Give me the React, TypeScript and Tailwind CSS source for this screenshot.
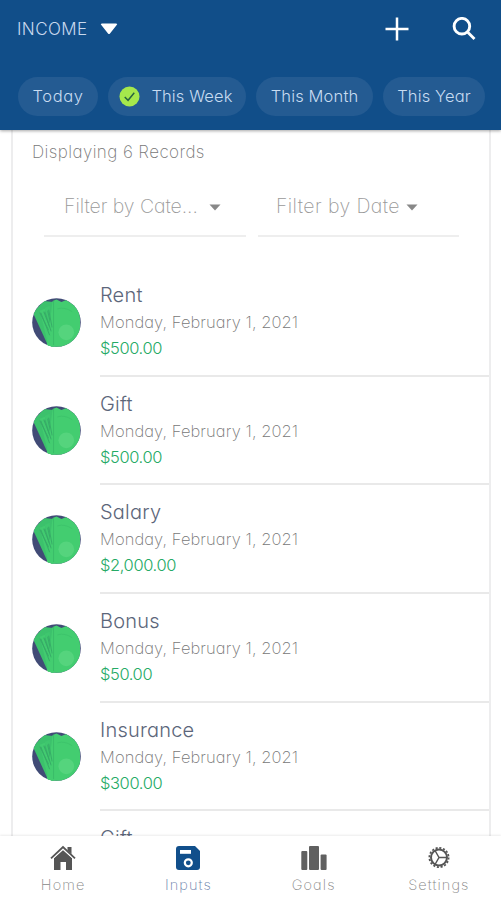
import clsx from 'clsx';
import type { ReactNode } from 'react';

const ranges = [
  { label: 'Today', size: 'w-20', text: 'text-[16.5px] tracking-[0.6px]' },
  { label: 'This Week', size: 'w-[138px]', text: 'text-[16.5px] tracking-[0.1px]', active: true },
  { label: 'This Month', size: 'w-[117px]', text: 'text-[16.5px] tracking-[0.15px]' },
  { label: 'This Year', size: 'w-[102px]', text: 'text-[16.5px] tracking-[0.15px]' },
];

const records = [
  { id: 1, name: 'Rent', date: 'Monday, February 1, 2021', amount: '$500.00' },
  { id: 2, name: 'Gift', date: 'Monday, February 1, 2021', amount: '$500.00' },
  { id: 3, name: 'Salary', date: 'Monday, February 1, 2021', amount: '$2,000.00' },
  { id: 4, name: 'Bonus', date: 'Monday, February 1, 2021', amount: '$50.00' },
  { id: 5, name: 'Insurance', date: 'Monday, February 1, 2021', amount: '$300.00' },
  { id: 6, name: 'Gift', date: 'Monday, February 1, 2021', amount: '$500.00' },
];

function MoneyAvatar() {
  return (
    <svg viewBox="0 0 50 50" className="block h-[49px] w-[49px] shrink-0">
      <defs>
        <clipPath id="avatar">
          <circle cx="25" cy="25" r="24.8" />
        </clipPath>
      </defs>
      <g clipPath="url(#avatar)">
        <rect width="50" height="50" fill="#414b76" />
        <path d="M1 15L12 3L22 4V50H17Z" fill="#3cc16c" />
        <path d="M8 13L13 11L22 50H17Z" fill="#42cb70" />
        <path d="M13 10L18 8L22 50Z" fill="#3fc66e" />
        <path d="M8 15L17 33M12 14L19 32M16 13L20 31" stroke="#35a967" strokeWidth="0.9" fill="none" />
        <path d="M15 50L21 3L25 1.5L30 4L35 2L44 8Q49 14 49 22V50Z" fill="#43cd70" />
        <path d="M9 15L18 38M13 14L19.5 34M17 12L20.5 30" stroke="#35a967" strokeWidth="0.9" fill="none" />
        <path d="M22 3V48" stroke="#39ba69" strokeWidth="0.9" />
        <path d="M26 11Q34 9 41 14" stroke="#3dc46c" fill="none" />
        <circle cx="35" cy="35" r="8" fill="#55d47d" />
      </g>
    </svg>
  );
}

function HomeIcon() {
  return (
    <svg viewBox="0 0 26 26" className="h-[26px] w-[26px]" fill="#555">
      <path d="M13 5L22 13V25H16V17H10.5V25H4V13Z" />
      <path d="M1 14L13 3L25 14" fill="none" stroke="#fff" strokeWidth="3" />
      <path d="M17.5 2H21.5V9L17.5 5.5Z" />
      <path d="M1 13.4L13 2L25 13.4" fill="none" stroke="#555" strokeWidth="1.8" />
    </svg>
  );
}

function SaveIcon() {
  return (
    <svg viewBox="0 0 26 26" className="h-[26px] w-[26px]">
      <path d="M4 1H20L25 6V22Q25 25 22 25H4Q1 25 1 22V4Q1 1 4 1Z" fill="#114f8b" />
      <rect x="5" y="5" width="11" height="3.8" fill="#fff" />
      <circle cx="13.3" cy="17.8" r="3.5" fill="none" stroke="#fff" strokeWidth="2.2" />
    </svg>
  );
}

function BarsIcon() {
  return (
    <svg viewBox="0 0 26 26" className="h-[26px] w-[26px]" fill="#606060">
      <rect x="0.3" y="6" width="6" height="19" rx="1" />
      <rect x="8" y="1" width="10" height="24" rx="1" />
      <rect x="19.6" y="9.5" width="6" height="15.5" rx="1" />
    </svg>
  );
}

function GearIcon() {
  return (
    <svg viewBox="0 0 26 26" className="h-[26px] w-[26px]" fill="none" stroke="#555">
      <circle cx="13" cy="12.5" r="9.6" strokeWidth="1.8" strokeDasharray="2.1 1.67" />
      <circle cx="13" cy="12.5" r="8" strokeWidth="2" />
      <path d="M13 12.5H21M13 12.5L9 5.5M13 12.5L9 19.5" strokeWidth="1.5" />
    </svg>
  );
}

function Caret() {
  return (
    <svg viewBox="0 0 12 7" className="h-[7px] w-3" fill="#888">
      <path d="M0.5 0.5H11.5L6 6.5Z" />
    </svg>
  );
}

function Tab({ label, active, children }: { label: string; active?: boolean; children: ReactNode }) {
  return (
    <button className="flex flex-1 flex-col items-center pt-[9px] pl-px">
      {children}
      <span
        className={clsx(
          'mt-1 text-[14.5px] leading-5 font-extralight tracking-[1.1px]',
          active ? 'text-[#6b7fab]' : 'text-[#888]',
        )}
      >
        {label}
      </span>
    </button>
  );
}

export default function App() {
  return (
    <div className="flex h-[900px] w-[501px] flex-col overflow-hidden bg-white font-['Inter',sans-serif] font-light [font-feature-settings:'cv11']">
      <header className="z-10 h-[130px] shrink-0 bg-[#114e89] shadow-[0_1px_3px_rgba(0,0,0,0.35)]">
        <div className="flex h-[57px] items-center pr-[25px] pl-[17px] text-white">
          <span className="w-[83px] text-[17px] leading-6 tracking-[0.4px] text-[#c8d8ed]">INCOME</span>
          <svg viewBox="0 0 18 12" className="h-3 w-[18px]" fill="#fff">
            <path d="M2 0.5H16Q18 0.5 16.7 2L10 10.5Q9 11.7 8 10.5L1.3 2Q0 0.5 2 0.5Z" />
          </svg>
          <svg viewBox="0 0 24 24" className="ml-auto h-6 w-6" stroke="#fff" strokeWidth="2.5">
            <path d="M12 0.5V23.5M0.5 12H23.5" />
          </svg>
          <svg viewBox="0 0 24 24" className="ml-[43px] h-6 w-6" fill="none" stroke="#fff" strokeWidth="2.9">
            <circle cx="9.9" cy="9.2" r="7.8" />
            <path d="M15.5 15L22.5 22" />
          </svg>
        </div>
        <div className="mt-5 flex gap-2.5 pl-[18px]">
          {ranges.map((range) => (
            <button
              key={range.label}
              className={clsx(
                'flex h-[39px] items-center justify-center rounded-full bg-[#245b92] pb-px whitespace-nowrap text-[#c8dcf1]',
                range.size,
                range.text,
              )}
            >
              {range.active && (
                <svg viewBox="0 0 22 22" className="-ml-0.5 mr-[11px] h-[21px] w-[21px] shrink-0">
                  <circle cx="11" cy="11" r="10.5" fill="#a5e84c" />
                  <path d="M6 11.5L9.5 15L16 7" fill="none" stroke="#27633f" strokeWidth="1.5" />
                </svg>
              )}
              {range.label}
            </button>
          ))}
        </div>
      </header>

      <main className="ml-[11px] h-[706px] w-[480px] shrink-0 overflow-hidden border-x-2 border-[#ededee]">
        <p className="ml-[19px] pt-3 text-[17px] leading-5 font-extralight tracking-[0.4px] text-[#777]">Displaying 6 Records</p>
        <div className="mt-[25px] ml-[31px] flex gap-3 text-[19.5px] font-extralight text-[#999]">
          <div className="flex h-[50px] w-[202px] items-center border-b-2 border-[#eee] pb-2 pl-5">
            <span className="w-[145px] tracking-[-0.05px]">Filter by Cate...</span>
            <Caret />
          </div>
          <div className="flex h-[50px] w-[201px] items-center border-b-2 border-[#eee] pb-2 pl-[18px]">
            <span className="w-[130px] tracking-[0.4px]">Filter by Date</span>
            <Caret />
          </div>
        </div>

        <ul className="mt-[31px]">
          {records.map((record) => (
            <li key={record.id} className="flex h-[108.7px] pl-[19px]">
              <div className="mt-[29.5px]">
                <MoneyAvatar />
              </div>
              <div className="ml-[19px] flex-1 border-b-2 border-[#e9e9e9] pt-[13px] whitespace-nowrap">
                <div className="text-[20px] leading-[28px] tracking-[0.2px] text-[#5c667a]">{record.name}</div>
                <div className="text-[16.5px] leading-[26px] font-extralight tracking-[0.08px] text-[#777]">{record.date}</div>
                <div className="text-[16.5px] leading-[26px] tracking-[-0.4px] text-[#25aa65]">{record.amount}</div>
              </div>
            </li>
          ))}
        </ul>
      </main>

      <nav className="z-10 flex h-16 shrink-0 bg-white shadow-[0_-1px_2px_rgba(0,0,0,0.08)]">
        <Tab label="Home">
          <HomeIcon />
        </Tab>
        <Tab label="Inputs" active>
          <SaveIcon />
        </Tab>
        <Tab label="Goals">
          <BarsIcon />
        </Tab>
        <Tab label="Settings">
          <GearIcon />
        </Tab>
      </nav>
    </div>
  );
}
